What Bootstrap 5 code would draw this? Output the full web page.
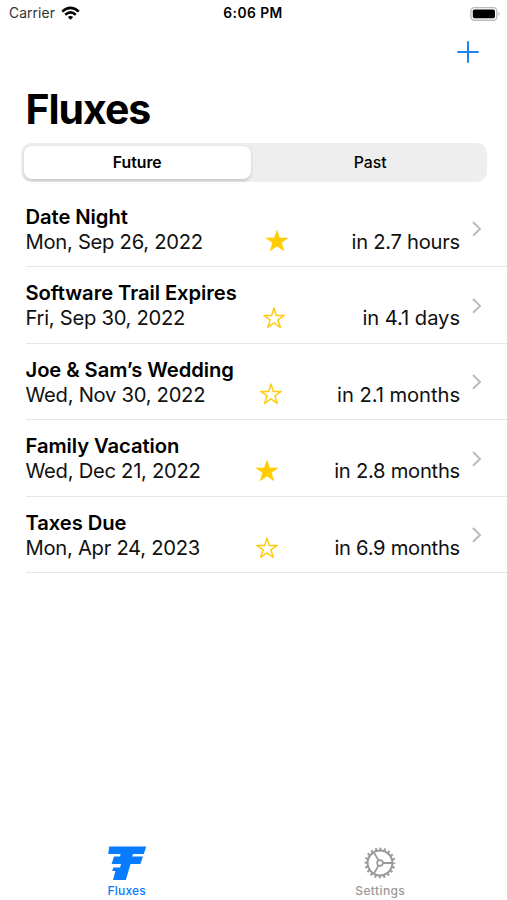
<!DOCTYPE html>
<html lang="en">
<head>
<meta charset="utf-8">
<meta name="viewport" content="width=device-width, initial-scale=1">
<title>Fluxes</title>
<link rel="stylesheet" href="https://cdn.jsdelivr.net/npm/bootstrap@5.3.0/dist/css/bootstrap.min.css">
<style>
body{font-family:Inter,"Liberation Sans",sans-serif;color:#000;background:#fff}
svg{display:block;flex:none}
.screen{height:900px;overflow:hidden}
.status{height:27px;padding:0 6px 0 9px;font-size:13.8px;line-height:27px}
.status>*{flex:1 1 0}
.carrier{color:#333;letter-spacing:.12px;gap:6px}
.clock{font-weight:600;letter-spacing:.45px;white-space:nowrap}
.toolbar{height:50px;padding-right:28px}
.page-title{font-size:41px;font-weight:700;line-height:50px;letter-spacing:-1.05px;margin:7px 0 0 25.5px}
.segments{margin:9px 20px 8.9px 21px;height:38.6px;padding:2.5px;background:#eee;border-radius:10px;font-size:15.8px}
.segments .nav-link{padding:0 0 0 5px;color:#000;font-weight:500;line-height:33.6px;border-radius:8px}
.segments .nav-link.active{flex:0 0 227.5px;padding:0;background:#fff;color:#000;font-weight:600;box-shadow:0 1.5px 3px rgba(0,0,0,.16)}
.events .list-group-item{height:76.6px;margin-left:25.5px;padding:13.2px 24px 0 0;border-color:#e6e6e6;border-width:0 0 1px;color:#111;font-size:20.2px;line-height:25px}
.events .list-group-item:last-child{border-bottom-width:1px}
.event-name{font-weight:600;letter-spacing:-.06px;color:#000}
.event-line{letter-spacing:-.27px}
.time-loose{letter-spacing:-.06px}
.chevron{margin:16.3px 0 0 11px}
.tabs{height:63.5px;font-size:12px;font-weight:500;line-height:14px}
.tabs .nav-link{padding:9px 0 0;color:#999;letter-spacing:.4px}
.tabs .nav-link.active{color:#087cff;letter-spacing:.2px}
.tabs svg{margin:0 auto 4px}
</style>
</head>
<body>
<svg width="0" height="0" class="position-absolute" aria-hidden="true">
<defs>
<path id="star-full" d="M12 1.2 14.7 8.9H23L16.4 13.8 18.8 21.8 12 17.1 5.2 21.8 7.6 13.8 1 8.9H9.3Z" stroke="#fc0" stroke-width=".5" stroke-linejoin="round"/>
<path id="star-line" d="M12 2.1 14.3 9.4H22.2L15.9 13.9 18.4 21.4 12 16.9 5.6 21.4 8.1 13.9 1.8 9.4H9.7Z" fill="none" stroke="#fc1" stroke-width="1.5" stroke-linejoin="round"/>
<path id="chev" d="M2 2 9 8.9 2 15.8" fill="none" stroke="#bbb" stroke-width="2"/>
</defs>
</svg>
<main class="screen d-flex flex-column">
<header>
<div class="status d-flex align-items-center">
<div class="carrier d-flex align-items-center">Carrier
<svg width="19" height="15" viewBox="0 0 19 15"><g fill="none" stroke="#000" stroke-width="2.5"><path d="M1.2 5.6Q9.5-1.8 17.8 5.6"/><path d="M4.2 8.8Q9.5 4 14.8 8.8"/></g><path d="M6.8 11Q9.5 8.8 12.2 11L9.5 13.8Z"/></svg></div>
<div class="clock text-center pe-1">6:06 PM</div>
<div class="d-flex justify-content-end"><svg width="31" height="14" viewBox="0 0 31 14"><rect x=".9" y=".6" width="26" height="12.6" rx="3.6" fill="#fff" stroke="#bbb" stroke-width="1.4"/><rect x="2.8" y="2.5" width="22.2" height="8.8" rx="1.8"/><path d="M28.6 4.5Q31 6.9 28.6 9.3Z" fill="#bbb"/></svg></div>
</div>
<div class="toolbar d-flex justify-content-end align-items-center"><svg width="22" height="22" viewBox="0 0 22 22"><path d="M11 .3V21.7M.3 11H21.7" stroke="#1b83f5" stroke-width="2"/></svg></div>
<h1 class="page-title">Fluxes</h1>
</header>
<nav class="segments nav nav-pills nav-justified"><a class="nav-link active">Future</a><a class="nav-link">Past</a></nav>
<div class="events list-group list-group-flush">
<div class="list-group-item d-flex"><div class="flex-grow-1"><div class="event-name">Date Night</div><div class="event-line d-flex justify-content-between align-items-center"><span>Mon, Sep 26, 2022</span><svg width="24" height="24" fill="#fc0"><use href="#star-full"/></svg><span>in 2.7 hours</span></div></div><svg class="chevron" width="12" height="18"><use href="#chev"/></svg></div>
<div class="list-group-item d-flex"><div class="flex-grow-1"><div class="event-name">Software Trail Expires</div><div class="event-line d-flex justify-content-between align-items-center"><span>Fri, Sep 30, 2022</span><svg width="24" height="24"><use href="#star-line"/></svg><span class="time-loose">in 4.1 days</span></div></div><svg class="chevron" width="12" height="18"><use href="#chev"/></svg></div>
<div class="list-group-item d-flex"><div class="flex-grow-1"><div class="event-name">Joe &amp; Sam’s Wedding</div><div class="event-line d-flex justify-content-between align-items-center"><span>Wed, Nov 30, 2022</span><svg width="24" height="24"><use href="#star-line"/></svg><span class="time-loose">in 2.1 months</span></div></div><svg class="chevron" width="12" height="18"><use href="#chev"/></svg></div>
<div class="list-group-item d-flex"><div class="flex-grow-1"><div class="event-name">Family Vacation</div><div class="event-line d-flex justify-content-between align-items-center"><span>Wed, Dec 21, 2022</span><svg width="24" height="24" fill="#fc0"><use href="#star-full"/></svg><span>in 2.8 months</span></div></div><svg class="chevron" width="12" height="18"><use href="#chev"/></svg></div>
<div class="list-group-item d-flex"><div class="flex-grow-1"><div class="event-name">Taxes Due</div><div class="event-line d-flex justify-content-between align-items-center"><span>Mon, Apr 24, 2023</span><svg width="24" height="24"><use href="#star-line"/></svg><span>in 6.9 months</span></div></div><svg class="chevron" width="12" height="18"><use href="#chev"/></svg></div>
</div>
<nav class="tabs nav nav-justified mt-auto">
<a class="nav-link active"><svg width="38" height="34" viewBox="0 0 38 34"><path d="M1.2.6H38.2L35.8 8H25L24.2 10.4H35L32.4 18H22.6L17.8 34H5L7.4 25H4.2L5.4 21.6H12L13 18H3.6L6 10.4H12L12.6 8H.2Z" fill="#087cff"/></svg>Fluxes</a>
<a class="nav-link"><svg width="34" height="34" viewBox="-17 -17 34 34" fill="none" stroke="#999"><circle r="12.4" stroke-width="2"/><circle r="14.2" stroke-width="2.4" stroke-dasharray="2 2.461" stroke-dashoffset="1"/><circle r="2.9" stroke-width="1.6"/><path d="M3 0H12M-1.5-2.6-6-10.4M-1.5 2.6-6 10.4" stroke-width="1.8"/></svg>Settings</a>
</nav>
</main>
<script src="https://cdn.jsdelivr.net/npm/bootstrap@5.3.0/dist/js/bootstrap.bundle.min.js"></script>
</body>
</html>
